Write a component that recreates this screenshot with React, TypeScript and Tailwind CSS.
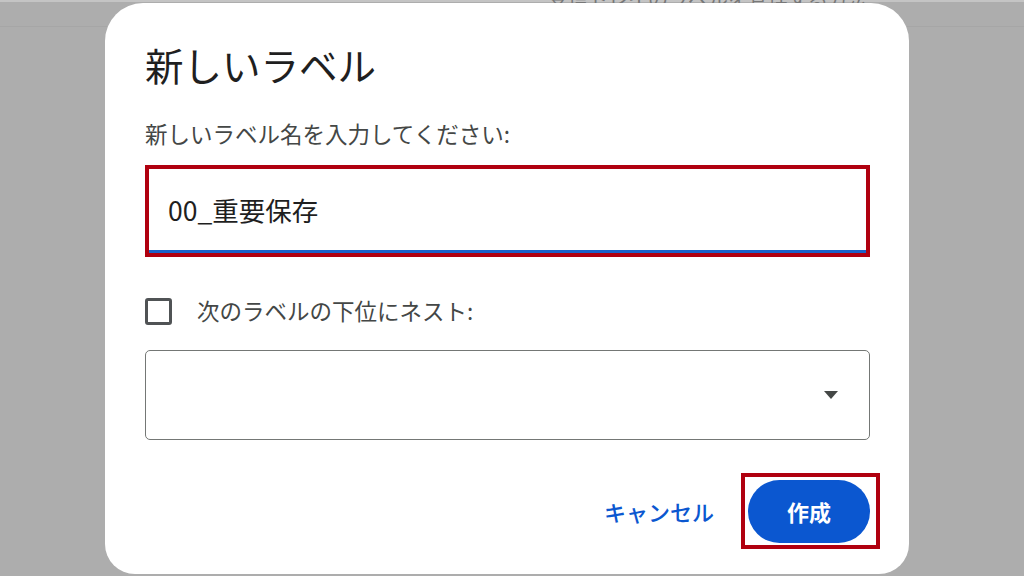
import React from "react";

const font = { fontFamily: '"Noto Sans CJK JP", "Noto Sans", sans-serif' };

export default function App() {
  return (
    <div
      className="relative w-[1024px] h-[576px] overflow-hidden bg-[#adadad]"
      style={font}
    >
      {/* page behind the dialog */}
      <div className="absolute inset-x-0 top-0 h-[2px] bg-[#c4c4c4]" />
      <div className="absolute inset-x-0 top-[26px] h-px bg-[#a6a6a6]" />
      <div className="absolute left-[548px] top-[-16px] text-[20px] text-[#777] whitespace-nowrap">
        受信トレイのラベルを管理する方法
      </div>

      {/* dialog */}
      <div className="relative ml-[105px] mt-[3px] w-[804px] h-[571px] bg-white rounded-t-[38px] rounded-b-[30px] flex flex-col pl-[40px] pr-[39px]">
        <h1 className="mt-[39px] text-[38.5px] leading-[44px] text-[#1f1f1f] font-normal">
          新しいラベル
        </h1>
        <p className="mt-[32px] text-[22.5px] leading-[30px] text-[#444746]">
          新しいラベル名を入力してください:
        </p>

        <div className="mt-[17px] h-[92px] border-4 border-[#b0000f] bg-white flex flex-col">
          <div className="flex-1 flex items-center pl-[19px] text-[26.5px] text-[#1f1f1f]">
            00_重要保存
          </div>
          <div className="h-[3px] bg-[#1a62c9]" />
        </div>

        <div className="mt-[39px] h-[30px] flex items-center gap-[25px]">
          <div className="w-[27px] h-[27px] border-[3px] border-[#505355] rounded-[3px]" />
          <span className="text-[22.5px] text-[#444746]">
            次のラベルの下位にネスト:
          </span>
        </div>

        <div className="mt-[24px] h-[90px] border border-[#747775] rounded-[5px] flex items-center justify-end pr-[31px]">
          <svg width="14" height="8" viewBox="0 0 14 8">
            <polygon points="0,0 14,0 7,8" fill="#444746" />
          </svg>
        </div>

        <div className="mt-[40px] flex items-center justify-end gap-[34px]">
          <button className="text-[22px] font-medium text-[#0b57d0]">
            キャンセル
          </button>
          <div className="relative">
            <button className="w-[122px] h-[63px] rounded-full bg-[#0b57d0] text-white text-[22px] font-bold">
              作成
            </button>
            <div className="absolute -left-[7px] -right-[10px] -top-[7px] -bottom-[6px] border-4 border-[#b0000f]" />
          </div>
        </div>
      </div>
    </div>
  );
}
